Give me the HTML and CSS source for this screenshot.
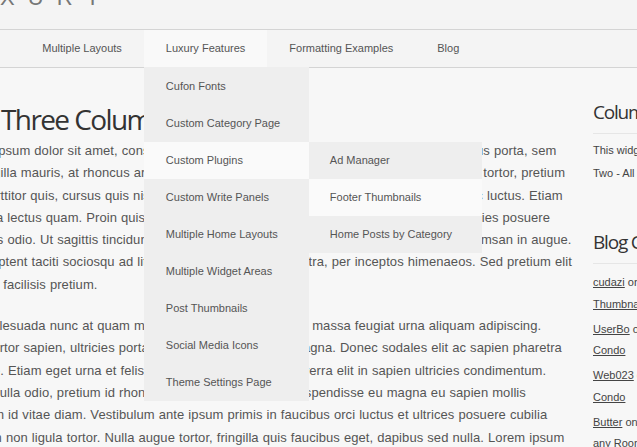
FILE: index.html
```html
<!DOCTYPE html>
<html lang="en">
<head>
    <meta charset="UTF-8">
    <title>Luxury - Three Column Page</title>
    <link rel="stylesheet" href="styles.css">
</head>
<body>
    <header class="masthead">
        <div class="logo">LUXURY</div>
    </header>

    <nav class="menu">
        <ul class="menu-list">
            <li><a href="#">Home</a></li>
            <li><a href="#">Multiple Layouts</a></li>
            <li class="current">
                <a href="#">Luxury Features</a>
                <ul class="dropdown">
                    <li><a href="#">Cufon Fonts</a></li>
                    <li><a href="#">Custom Category Page</a></li>
                    <li class="active">
                        <a href="#">Custom Plugins</a>
                        <ul class="dropdown sub">
                            <li><a href="#">Ad Manager</a></li>
                            <li class="active"><a href="#">Footer Thumbnails</a></li>
                            <li><a href="#">Home Posts by Category</a></li>
                        </ul>
                    </li>
                    <li><a href="#">Custom Write Panels</a></li>
                    <li><a href="#">Multiple Home Layouts</a></li>
                    <li><a href="#">Multiple Widget Areas</a></li>
                    <li><a href="#">Post Thumbnails</a></li>
                    <li><a href="#">Social Media Icons</a></li>
                    <li><a href="#">Theme Settings Page</a></li>
                </ul>
            </li>
            <li><a href="#">Formatting Examples</a></li>
            <li><a href="#">Blog</a></li>
        </ul>
    </nav>

    <div class="columns">
        <main class="content">
            <h1 class="title">Three Column Page</h1>
            <p>Lorem ipsum dolor sit amet, consectetur adipiscing elit. Praesent vitae nisi et nullam cursus porta, sem<br>
            vel fringilla mauris, at rhoncus arcu. Mauris eget tellus vel lorem ullamcorper luctus sed in tortor, pretium<br>
            velit porttitor quis, cursus quis nisl. Vivamus ultrices dapibus nulla, at pharetra nec ante ac luctus. Etiam<br>
            Donec a lectus quam. Proin quis eleifend ornare vulputate. Aliquam semper lacus mi ultricies posuere<br>
            et luctus odio. Ut sagittis tincidunt lectus vitae fringilla nunc consequat non. Morbi ac accumsan in augue.<br>
            Class aptent taciti sociosqu ad litora torquent et conubia nostra, per inceptos himenaeos. Sed pretium elit<br>
            Aenean facilisis pretium.</p>
            <p>Sed malesuada nunc at quam mollis. Vestibulum eget nisi ut massa feugiat urna aliquam adipiscing.<br>
            Nunc tortor sapien, ultricies porta pellentesque quam nisi magna. Donec sodales elit ac sapien pharetra<br>
            tristique. Etiam eget urna et felis consectetur eget mauris viverra elit in sapien ultricies condimentum.<br>
            dolor. Nulla odio, pretium id rhoncus. Curabitur quis sed. Suspendisse eu magna eu sapien mollis<br>
            at ipsum id vitae diam. Vestibulum ante ipsum primis in faucibus orci luctus et ultrices posuere cubilia<br>
            Etiam in non ligula tortor. Nulla augue tortor, fringilla quis faucibus eget, dapibus sed nulla. Lorem ipsum<br>
            dolor sit amet, consectetur adipiscing elit.</p>
        </main>

        <aside class="sidebar">
            <div class="widget">
                <h3>Column Two</h3>
                <p>This widget area is Column<br>Two - All pages</p>
            </div>
            <div class="widget">
                <h3>Blog Comments</h3>
                <ul class="comments">
                    <li><a href="#">cudazi</a> on <a href="#" class="post">Thumbnails in the Footer</a></li>
                    <li><a href="#">UserBo</a> on <a href="#" class="post">Condo</a></li>
                    <li><a href="#">Web023</a> on <a href="#" class="post">Condo</a></li>
                    <li><a href="#">Butter</a> on <a href="#" class="post">any Room in the House</a></li>
                </ul>
            </div>
        </aside>
    </div>
</body>
</html>
```

FILE: styles.css
```css
/* Global */
body {
    margin: 0;
    background: #f7f7f7;
    color: #555;
    font-family: "Liberation Sans", Arial, sans-serif;
    overflow: hidden;
}

/* Header */
.masthead {
    height: 29px;
    background: #f4f4f4;
    border-bottom: 1px solid #d4d4d4;
    overflow: hidden;
}
.logo {
    margin: -13px 0 0 -54px;
    font-size: 22px;
    line-height: 22px;
    letter-spacing: 13px;
    color: #777;
}

/* Navigation */
.menu {
    height: 37px;
    background: #f4f4f4;
    border-bottom: 1px solid #d4d4d4;
}
.menu-list {
    display: flex;
    margin: 0 0 0 -53px;
    padding: 0;
    list-style: none;
}
.menu-list li {
    position: relative;
}
.menu-list a {
    display: block;
    padding: 0 22px;
    line-height: 37px;
    font-size: 11px;
    color: #555;
    text-decoration: none;
    white-space: nowrap;
}
.menu-list > li.current > a {
    background: #f9f9f9;
}

/* Dropdowns */
.dropdown {
    position: absolute;
    top: 37px;
    left: 0;
    width: 165px;
    margin: 0;
    padding: 0;
    list-style: none;
    background: #eee;
    border-top: 1px solid #eee;
    z-index: 5;
}
.dropdown li.active > a {
    background: #fafafa;
}
.dropdown.sub {
    top: 0;
    left: 165px;
    width: 173px;
    border-top: 0;
}
.dropdown.sub a {
    padding-left: 21px;
}

/* Columns */
.columns {
    display: flex;
    margin-left: -46px;
}
.content {
    flex: none;
    width: 626px;
    padding-top: 34px;
}
.title {
    margin: 0 0 4px 47px;
    font-family: "Open Sans", sans-serif;
    font-size: 28px;
    font-weight: normal;
    line-height: 34px;
    letter-spacing: -1.6px;
    color: #333;
}
.content p {
    margin: 0 0 19px;
    font-size: 13px;
    line-height: 22.3px;
    letter-spacing: 0.08px;
    word-spacing: 0.3px;
    white-space: nowrap;
}

/* Sidebar */
.sidebar {
    flex: none;
    width: 200px;
    margin-left: 13px;
    padding-top: 32px;
    font-size: 11px;
    color: #444;
}
.widget {
    margin-bottom: 46px;
}
.widget h3 {
    margin: 0;
    padding-bottom: 9px;
    border-bottom: 1px solid #e6e6e6;
    font-family: "Open Sans", sans-serif;
    font-size: 19px;
    font-weight: normal;
    line-height: 24px;
    letter-spacing: -1.2px;
    color: #333;
}
.widget p {
    margin: 5px 0 0;
    line-height: 22.5px;
}
.comments {
    margin: 8px 0 0;
    padding: 0;
    list-style: none;
    line-height: 21.5px;
}
.comments li {
    margin-bottom: 3.5px;
}
.comments a {
    color: #444;
}
.comments .post {
    display: block;
}
```
